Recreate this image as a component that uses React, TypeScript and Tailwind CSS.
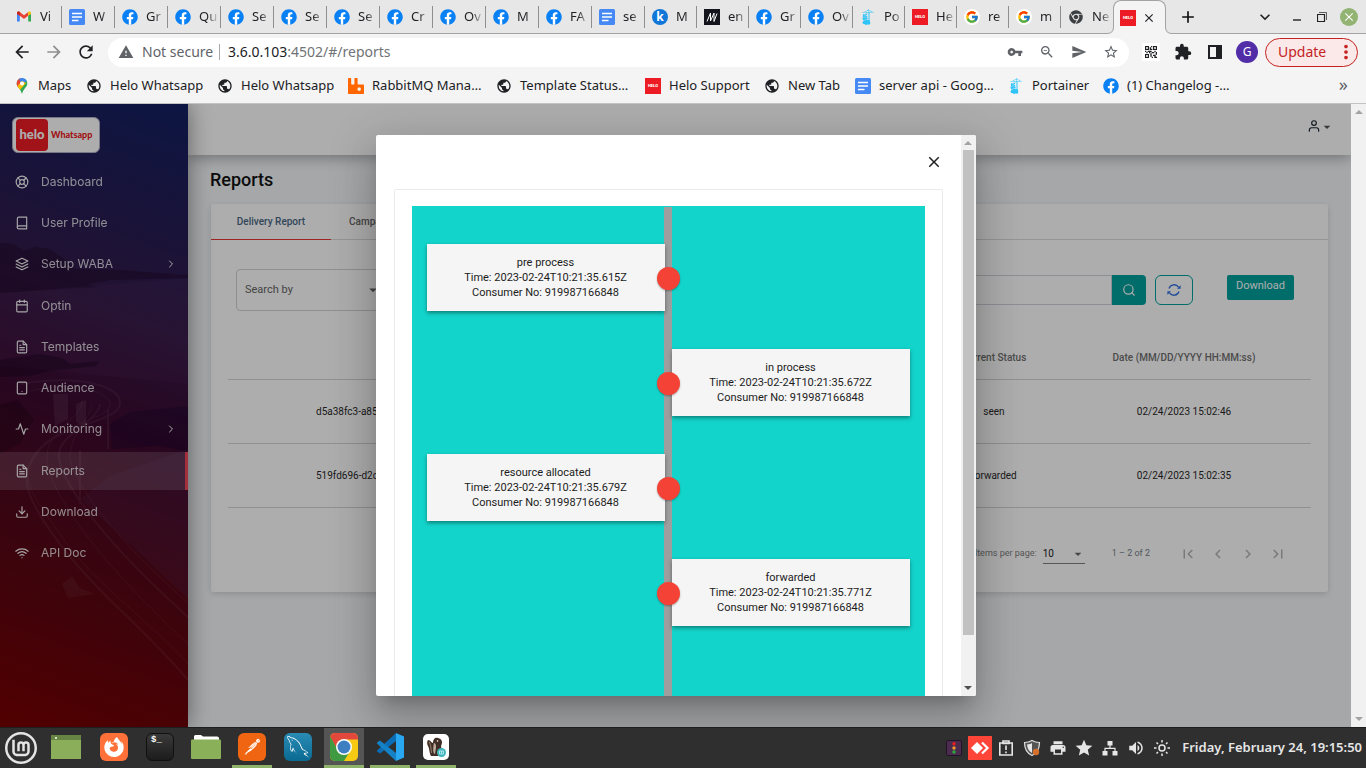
import type { ReactNode } from 'react';
import {
  FiActivity, FiBook, FiCalendar, FiChevronRight, FiDownload, FiFileText,
  FiLayers, FiLifeBuoy, FiSearch, FiTablet, FiUser, FiWifi,
} from 'react-icons/fi';
import {
  MdAdd, MdArrowBack, MdArrowForward, MdArrowDropDown, MdChevronLeft, MdChevronRight,
  MdClose, MdExtension, MdFirstPage, MdLastPage, MdPrint, MdPublic, MdQrCode2, MdRefresh,
  MdSend, MdStar, MdStarBorder, MdVolumeUp, MdVpnKey, MdWarning, MdZoomOut, MdMoreVert,
  MdKeyboardArrowDown,
} from 'react-icons/md';
import { FaChrome, FaFacebook } from 'react-icons/fa';
import { FcGoogle } from 'react-icons/fc';
import { SiFirefoxbrowser, SiLinuxmint, SiPortainer, SiPostman, SiRabbitmq } from 'react-icons/si';
import { GrMysql } from 'react-icons/gr';

/* ---------- Favicons ---------- */

function Facebook() {
  return (
    <span className="flex size-4 items-center justify-center rounded-full bg-[radial-gradient(circle,#fff_60%,transparent_62%)]">
      <FaFacebook className="size-4 text-[#0a80f5]" />
    </span>
  );
}

function Docs() {
  return (
    <svg viewBox="0 0 16 16" className="size-4">
      <rect width="16" height="16" rx="1.5" fill="#4688f4" />
      <path d="M3 4.5h10M3 8h10M3 11.5h6.5" stroke="#fff" strokeWidth="1.5" />
    </svg>
  );
}

function Gmail() {
  return (
    <svg viewBox="0 0 16 12" className="h-3 w-4">
      <path d="M1 2v8.5h2.8V4.5z" fill="#4285f4" />
      <path d="M15 2v8.5h-2.8V4.5z" fill="#34a853" />
      <path d="M1 2.2C1 .6 2.6.2 3.8 1L8 4.2 12.2 1v3.7L8 7.9 3.8 4.7 1 2.9z" fill="#ea4335" />
      <path d="M12.2 1C13.4.2 15 .6 15 2.2v.7l-2.8 1.8z" fill="#fbbc04" />
      <path d="M3.8 1C2.6.2 1 .6 1 2.2v.7l2.8 1.8z" fill="#c5221f" />
    </svg>
  );
}

function Helo() {
  return (
    <span className="flex size-4 items-center justify-center bg-[#ed1c24] font-['Roboto',sans-serif] text-[4px] leading-none font-black text-white">
      HELO
    </span>
  );
}

function Klip() {
  return (
    <span className="flex size-4 items-center justify-center rounded-full bg-[#1077d8] font-['Noto_Sans',sans-serif] text-xs leading-none font-bold text-white">
      k
    </span>
  );
}

function Slanted() {
  return (
    <svg viewBox="0 0 16 16" className="size-4">
      <rect width="16" height="16" fill="#14141c" />
      <path d="M3 12.500 6.500 4 6.500 12 10 4 10 12.500 13 4.500" stroke="#fff" strokeWidth="1" fill="none" />
    </svg>
  );
}

function Google() {
  return (
    <span className="flex size-4 items-center justify-center rounded-full bg-white">
      <FcGoogle className="size-3.5" />
    </span>
  );
}

function MapsPin() {
  return (
    <svg viewBox="0 0 16 16" className="size-4">
      <clipPath id="pin">
        <path d="M8 0a5.3 5.3 0 0 0-5.3 5.4C2.7 9 6.6 10.400 8 16c1.400-5.600 5.300-7 5.300-10.600A5.300 5.300 0 0 0 8 0z" />
      </clipPath>
      <g clipPath="url(#pin)">
        <path d="M0 0h16v16H0z" fill="#34a853" />
        <path d="M0 0h8v5L3 10H0z" fill="#ea4335" />
        <path d="M4.500 0H16L8 7z" fill="#4285f4" />
        <path d="M2 9.500 8 3l4 2-7 8z" fill="#fbbc04" />
        <circle cx="8" cy="5.400" r="2" fill="#fff" />
      </g>
    </svg>
  );
}

const portainer = <SiPortainer className="size-4 text-[#2fc4f7]" />;
const globe = <MdPublic className="size-4 text-[#202124]" />;

/* ---------- Browser ---------- */

const wideTabs: [ReactNode, string][] = [
  [<Gmail />, 'Vi'], [<Docs />, 'W'], [<Facebook />, 'Gr'], [<Facebook />, 'Qu'],
  [<Facebook />, 'Se'], [<Facebook />, 'Se'], [<Facebook />, 'Se'], [<Facebook />, 'Cr'],
  [<Facebook />, 'Ov'], [<Facebook />, 'M'], [<Facebook />, 'FA'], [<Docs />, 'se'],
];
const narrowTabs: [ReactNode, string][] = [
  [<Klip />, 'M'], [<Slanted />, 'en'], [<Facebook />, 'Gr'], [<Facebook />, 'Ov'],
  [portainer, 'Po'], [<Helo />, 'He'], [<Google />, 're'], [<Google />, 'm'],
  [<FaChrome className="size-3.5 text-[#3c4043]" />, 'Ne'],
];

function Tab({ icon, text, width, last }: { icon: ReactNode; text: string; width: string; last?: boolean }) {
  return (
    <button className={`flex h-[22px] items-center border-r pl-[7px] ${width} ${last ? 'border-transparent' : 'border-[#8f8f8f]'}`}>
      <span className="flex w-4 shrink-0 justify-center">{icon}</span>
      <span className="ml-2 text-left text-[13px] whitespace-nowrap [mask-image:linear-gradient(to_right,#000_8px,rgba(0,0,0,0.15)_18px)]">
        {text}
      </span>
    </button>
  );
}

function TabStrip() {
  return (
    <div className="flex h-[34px] items-center border-b border-[#a3a3a3] bg-[#e7e7e7] pl-[9px]">
      {wideTabs.map(([icon, text], i) => <Tab key={i} icon={icon} text={text} width="w-[53px]" />)}
      {narrowTabs.map(([icon, text], i) => (
        <Tab key={i} icon={icon} text={text} width="w-[52px]" last={i === narrowTabs.length - 1} />
      ))}
      <div className="relative -mb-px flex h-[34px] w-[53px] shrink-0 items-center gap-[6px] self-end rounded-t-lg border border-b-0 border-[#a3a3a3] bg-[#f4f4f4] pl-1.5">
        <svg viewBox="0 0 7 7" className="absolute bottom-0 -left-[7px] size-[7px]">
          <path d="M0 6.500Q6.500 6.500 6.500 0H8v7H0z" fill="#f4f4f4" />
          <path d="M0 6.500Q6.500 6.500 6.500 0" fill="none" stroke="#a3a3a3" />
        </svg>
        <svg viewBox="0 0 7 7" className="absolute -right-[7px] bottom-0 size-[7px]">
          <path d="M7 6.500Q.5 6.500 .5 0H-1v7h8z" fill="#f4f4f4" />
          <path d="M7 6.500Q.5 6.500 .5 0" fill="none" stroke="#a3a3a3" />
        </svg>
        <Helo />
        <button aria-label="Close tab"><MdClose className="size-3.5 text-[#202124]" /></button>
      </div>
      <button aria-label="New tab" className="ml-3"><MdAdd className="size-5 text-[#111]" /></button>
      <div className="ml-auto flex items-center pr-2">
        <button aria-label="Search tabs"><MdKeyboardArrowDown className="size-5 text-[#202124]" /></button>
        <button aria-label="Minimize" className="ml-[18px]">
          <svg viewBox="0 0 8 10" className="h-2.5 w-2"><path d="M0 8h8" stroke="#111" strokeWidth="1.300" /></svg>
        </button>
        <button aria-label="Restore" className="ml-[16px]">
          <svg viewBox="0 0 10 10" className="size-2.5" fill="none" stroke="#222">
            <path d="M.5 2.500h7v7h-7z" strokeWidth="1.200" /><path d="M2 .5h7.500v7.500" strokeWidth=".7" />
          </svg>
        </button>
        <button aria-label="Close window" className="ml-[13px] flex size-[18px] items-center justify-center rounded-full bg-[#92b372]">
          <MdClose className="size-3.5 text-white" />
        </button>
      </div>
    </div>
  );
}

function Toolbar() {
  return (
    <div className="flex h-9 items-center bg-[#f4f4f4] pr-2 pl-3">
      <div className="flex w-24 shrink-0 items-center gap-3 text-[#202124]">
        <button aria-label="Back"><MdArrowBack className="size-5" /></button>
        <button aria-label="Forward"><MdArrowForward className="size-5 text-[#8e8e8e]" /></button>
        <button aria-label="Reload"><MdRefresh className="size-5" /></button>
      </div>
      <div className="flex h-[29px] grow items-center rounded-full bg-white px-2.5 text-sm text-[#5f6368]">
        <MdWarning className="size-4" />
        <span className="ml-2 w-[69px] whitespace-nowrap">Not secure</span>
        <span className="mx-2 h-4 w-px bg-[#a9a9a9]" />
        <span className="whitespace-nowrap text-[#6f7377]"><span className="text-[#202124]">3.6.0.103</span>:4502/#/reports</span>
        <span className="ml-auto flex items-center gap-4">
          <MdVpnKey className="size-4" /><MdZoomOut className="size-4" /><MdSend className="size-4" /><MdStarBorder className="size-4" />
        </span>
      </div>
      <div className="ml-[13px] flex items-center gap-[14px] text-[#202124]">
        <span className="flex size-[18px] items-center justify-center bg-white"><MdQrCode2 className="size-4" /></span>
        <MdExtension className="size-[18px]" />
        <svg viewBox="0 0 18 18" className="size-[18px]">
          <path d="M3 3h12v12H3z" fill="none" stroke="currentColor" strokeWidth="2" /><path d="M10 3h5v12h-5z" fill="currentColor" />
        </svg>
        <span className="-mx-[2px] flex size-[22px] items-center justify-center rounded-full bg-[#512da8] text-xs text-white">G</span>
      </div>
      <button className="ml-[9px] flex h-[29px] w-[93px] items-center justify-between rounded-full border border-[#c5221f] bg-[#fae9e8] pl-3 text-sm text-[#c5221f]">
        Update<MdMoreVert className="size-[22px]" />
      </button>
    </div>
  );
}

const bookmarks: [ReactNode, string, string][] = [
  [<MapsPin />, 'Maps', 'w-[72px]'],
  [globe, 'Helo Whatsapp', 'w-[131px]'],
  [globe, 'Helo Whatsapp', 'w-[131px]'],
  [<SiRabbitmq className="size-4 text-[#ff6600]" />, 'RabbitMQ Mana…', 'w-[148px]'],
  [globe, 'Template Status…', 'w-[149px]'],
  [<Helo />, 'Helo Support', 'w-[119px]'],
  [globe, 'New Tab', 'w-[91px]'],
  [<Docs />, 'server api - Goog…', 'w-[153px]'],
  [portainer, 'Portainer', 'w-[95px]'],
  [<Facebook />, '(1) Changelog -…', 'w-[130px]'],
];

function Bookmarks() {
  return (
    <nav className="flex h-[34px] items-center border-b border-[#c2c2c2] bg-[#f4f4f4] pb-0.5 pl-3.5">
      {bookmarks.map(([icon, text, width], i) => (
        <a key={i} href="#" className={`flex shrink-0 items-center gap-2 text-[13px] whitespace-nowrap ${width}`}>
          {icon}{text}
        </a>
      ))}
      <button aria-label="More bookmarks" className="mr-[18px] ml-auto pb-1 text-lg leading-none text-[#5f6368]">»</button>
    </nav>
  );
}

/* ---------- Sidebar ---------- */

const menu = [
  { label: 'Dashboard', Icon: FiLifeBuoy },
  { label: 'User Profile', Icon: FiBook },
  { label: 'Setup WABA', Icon: FiLayers, more: true },
  { label: 'Optin', Icon: FiCalendar },
  { label: 'Templates', Icon: FiFileText },
  { label: 'Audience', Icon: FiTablet },
  { label: 'Monitoring', Icon: FiActivity, more: true },
  { label: 'Reports', Icon: FiFileText, active: true },
  { label: 'Download', Icon: FiDownload },
  { label: 'API Doc', Icon: FiWifi },
];

function Landscape() {
  return (
    <svg viewBox="0 0 188 623" preserveAspectRatio="none" className="absolute inset-0 size-full">
      <path d="M0 139 14 140 24 147 35 143 50 145 64 155 75 165 120 166 188 171V174L110 176 88 180 97 183 0 189z" fill="#1d0426" opacity=".4" />
      <path d="M0 189 188 174V280L0 262z" fill="#6a3a7a" opacity=".1" />
      <path d="M0 256 40 250 62 254 70 260 100 257 96 262 50 267 30 272 0 273z" fill="#12021a" opacity=".35" />
      <path d="M0 300 18 296 34 315 20 340 0 350z" fill="#160310" opacity=".3" />
      <path d="M110 320 130 308 188 302V348L160 342 112 345z" fill="#12022e" opacity=".3" />
      <g fill="none" stroke="#b090a8" opacity=".1">
        <path d="M20 280C80 270 122 282 120 300S62 320 40 345 22 390 60 440 140 520 188 576" strokeWidth="2" />
        <path d="M30 287C80 275 112 290 110 302S50 325 35 350 28 385 62 433 140 508 188 560" />
        <path d="M100 300C98 318 60 330 59 350S90 425 188 513" strokeWidth="2" />
        <path d="M92 300C90 316 72 328 70 350S110 430 188 499" />
        <path d="M82 296C84 312 50 325 47 350S80 440 188 540" />
        <path d="M108 305V345M80 346V400" strokeWidth="2" />
      </g>
      <path d="M53 290H68V315L55 322zM76 300 86 296V325L76 318z" fill="#a890a8" opacity=".13" />
      <path d="M62 480 72 472 80 484 95 490 68 494z" fill="#9c6a7c" opacity=".12" />
      <path d="M80 395 110 372 188 345V495L130 440z" fill="#5d3a6a" opacity=".16" />
    </svg>
  );
}

function Sidebar() {
  return (
    <aside className="relative z-20 flex w-[188px] shrink-0 flex-col bg-[linear-gradient(20deg,#780000_0%,#560716_28%,#3c0a30_50%,#351a48_66%,#132063_100%)] text-white shadow-[0_0_22px_rgba(0,0,0,0.45)]">
      <Landscape />
      <a href="#" className="relative mt-[13px] ml-3 flex h-9 w-[88px] items-center gap-[3px] rounded-md border border-[#b0b0c8] bg-white pl-[3px]">
        <span className="flex size-8 shrink-0 items-center justify-center rounded-sm bg-[#ed1c24] font-['Lato',sans-serif] text-[13px] font-black">helo</span>
        <span className="font-['Lato',sans-serif] text-[9px] font-black text-[#ed1c24]">Whatsapp</span>
      </a>
      <nav className="relative mt-2.5 flex h-[409px] flex-col justify-between font-['Inter',sans-serif] text-xs">
        {menu.map(({ label, Icon, more, active }) => (
          <a
            key={label}
            href="#"
            className={`flex h-[38px] items-center border-r-[3px] pr-2 pl-[15px] ${active ? 'border-[#f0495a] bg-white/15' : 'border-transparent'}`}
          >
            <Icon className="size-3.5 shrink-0 opacity-95" />
            <span className="ml-3 grow opacity-80">{label}</span>
            {more && <FiChevronRight className="size-3 shrink-0" />}
          </a>
        ))}
      </nav>
    </aside>
  );
}

/* ---------- Page ---------- */

const rows = [
  { id: 'd5a38fc3-a85', status: 'seen', date: '02/24/2023 15:02:46' },
  { id: '519fd696-d2c', status: 'forwarded', date: '02/24/2023 15:02:35' },
];

function ReloadArrows() {
  return (
    <svg viewBox="0 0 14 14" className="size-3.5">
      <path d="M2 5.500A5.300 5.300 0 0 1 11.500 4.200M12 8.500A5.300 5.300 0 0 1 2.500 9.800" fill="none" stroke="currentColor" strokeWidth="1.300" />
      <path d="M10 5.800H13.600V2.200zM4 8.200H.4V11.800z" fill="currentColor" />
    </svg>
  );
}

function ReportsPage() {
  return (
    <div className="flex min-w-0 grow flex-col bg-[#f4f7fa]">
      <header className="z-10 flex h-[51px] shrink-0 items-center justify-end bg-white pr-4 pb-2 shadow-[0_2px_14px_rgba(0,0,0,0.35)]">
        <button aria-label="Account" className="flex items-center text-[#1a2530]">
          <FiUser className="-mr-0.5 size-3.5" /><MdArrowDropDown className="mt-0.5 size-4 text-[#555]" />
        </button>
      </header>
      <main className="pr-[23px] pl-[23px]">
        <h1 className="-ml-px pt-3 text-lg leading-[26px] font-medium text-[#111]">Reports</h1>
        <section className="mt-[11px] flex h-[388px] flex-col rounded-xs bg-white shadow-[0_2px_6px_rgba(0,0,0,0.15)]">
          <div className="flex h-9 border-b border-[#dcdcdc] text-[10px] font-medium">
            <button className="-mb-px w-[120px] border-b border-[#e53935] text-[#4a6785]">Delivery Report</button>
            <button className="w-[120px] pl-[18px] text-left text-[#666]">Campaign</button>
          </div>
          <form className="flex items-start pr-[34px] pl-[25px]">
            <label className="relative mt-[29px] flex w-[150px] items-center">
              <select aria-label="Search by" className="h-[42px] w-full appearance-none rounded border border-[#d3d3d3] px-2 text-[11px] text-[#666]">
                <option>Search by</option>
              </select>
              <MdArrowDropDown className="pointer-events-none absolute right-1 size-[18px] text-[#666]" />
            </label>
            <input aria-label="Search value" className="mt-[35px] ml-10 h-[30px] min-w-0 grow border border-[#ced4da] px-2 text-[11px]" />
            <button type="button" aria-label="Search" className="mt-[35px] flex h-[30px] w-[34px] items-center justify-center rounded-r bg-[#00a19c] text-white">
              <FiSearch className="size-3.5" />
            </button>
            <button type="button" aria-label="Refresh" className="mt-[35px] ml-[9px] flex h-[30px] w-[38px] items-center justify-center rounded-md border border-[#00a19c] text-[#2f6fe0]">
              <ReloadArrows />
            </button>
            <button type="button" className="mt-[35px] ml-[34px] h-[25px] w-[67px] rounded-xs bg-[#00a19c] pb-0.5 text-[11px] text-white">Download</button>
          </form>
          <div className="mt-[26px] pr-[17px] pl-[17px]">
            <table className="w-full table-fixed border-collapse text-[10px] text-[#2a2a2a]">
              <thead>
                <tr className="h-[42px] border-b border-[#d4d4d4] text-[#707070]">
                  <th />
                  <th className="w-[126px] text-center font-medium">Current Status</th>
                  <th className="w-[254px] text-center font-medium">Date (MM/DD/YYYY HH:MM:ss)</th>
                </tr>
              </thead>
              <tbody>
                {rows.map((r) => (
                  <tr key={r.id} className="h-16 border-b border-[#d4d4d4]">
                    <td className="pl-[88px]">{r.id}</td>
                    <td className="text-center">{r.status}</td>
                    <td className="text-center">{r.date}</td>
                  </tr>
                ))}
              </tbody>
            </table>
          </div>
          <div className="mt-[37px] flex items-center justify-end pr-[41px] text-[9px] text-[#808080]">
            <label htmlFor="size">Items per page:</label>
            <span className="relative ml-1.5 flex w-[42px] items-center border-b border-[#808080] text-[#222]">
              <select id="size" className="h-[18px] w-full appearance-none text-[10px]"><option>10</option></select>
              <MdArrowDropDown className="pointer-events-none absolute -right-px size-4 text-[#666]" />
            </span>
            <span className="mr-[29px] ml-[27px] whitespace-nowrap text-[#76808c]">1 – 2 of 2</span>
            <span className="flex gap-3 text-[#b4b4b4]">
              <button aria-label="First page"><MdFirstPage className="size-[18px]" /></button>
              <button aria-label="Previous page"><MdChevronLeft className="size-[18px]" /></button>
              <button aria-label="Next page"><MdChevronRight className="size-[18px]" /></button>
              <button aria-label="Last page"><MdLastPage className="size-[18px]" /></button>
            </span>
          </div>
        </section>
      </main>
    </div>
  );
}

/* ---------- Timeline dialog ---------- */

const steps = [
  { name: 'pre process', time: '2023-02-24T10:21:35.615Z' },
  { name: 'in process', time: '2023-02-24T10:21:35.672Z' },
  { name: 'resource allocated', time: '2023-02-24T10:21:35.679Z' },
  { name: 'forwarded', time: '2023-02-24T10:21:35.771Z' },
];

function Arrow({ up, color }: { up?: boolean; color: string }) {
  return (
    <svg viewBox="0 0 8 4" className={`h-1 w-2 ${color}`}>
      <path d={up ? 'M0 4 4 0l4 4z' : 'M0 0h8L4 4z'} fill="currentColor" />
    </svg>
  );
}

function TimelineDialog() {
  return (
    <div className="absolute inset-0 z-30 flex items-center justify-center bg-black/32">
      <div
        role="dialog"
        aria-label="Message timeline"
        className="flex h-[90%] w-[600px] overflow-hidden rounded-xs bg-white shadow-[0_11px_15px_-7px_rgba(0,0,0,0.2),0_24px_38px_3px_rgba(0,0,0,0.14),0_9px_46px_8px_rgba(0,0,0,0.12)]"
      >
        <div className="flex grow flex-col overflow-hidden px-[18px]">
          <div className="flex h-[54px] shrink-0 items-center justify-end">
            <button aria-label="Close"><MdClose className="size-[18px] text-[#222]" /></button>
          </div>
          <div className="grow rounded-t-xs border border-b-0 border-[#ebebeb] px-[17px] pt-4">
            <ol className="relative flex h-full flex-col gap-[38px] bg-[#13d4ca] px-[15px] pt-[38px]">
              <span className="absolute top-px bottom-0 left-1/2 -ml-1 w-2 bg-[#9e9e9e]" />
              {steps.map((s, i) => (
                <li key={s.name} className="relative grid grid-cols-2 gap-[7px] text-center text-[11px] leading-[15px] text-[#1c1c1c]">
                  <div className={`bg-[#f5f5f5] py-[11px] shadow-[0_2px_4px_rgba(0,0,0,0.4)] ${i % 2 ? 'col-start-2' : ''}`}>
                    <p>{s.name}</p>
                    <p>Time: {s.time}</p>
                    <p>Consumer No: 919987166848</p>
                  </div>
                  <span className="absolute top-1/2 left-1/2 -mt-[11px] -ml-[11px] size-[23px] rounded-full bg-[#f44336] shadow-[0_1px_2px_rgba(0,0,0,0.3)]" />
                </li>
              ))}
            </ol>
          </div>
        </div>
        <div className="flex w-[15px] shrink-0 flex-col items-center bg-[#f1f1f1]">
          <span className="flex h-[15px] items-center"><Arrow up color="text-[#a3a3a3]" /></span>
          <span className="h-[485px] w-[11px] bg-[#c1c1c1]" />
          <span className="mt-auto flex h-[15px] items-center"><Arrow color="text-[#505050]" /></span>
        </div>
      </div>
    </div>
  );
}

/* ---------- Taskbar ---------- */

function VsCode() {
  return (
    <svg viewBox="0 0 28 28" className="size-7">
      <path d="M20 0v8L4 20.500 1 18.500V17.500z" fill="#0a6db5" />
      <path d="M20 28v-8L4 7.500 1 9.500V10.500z" fill="#1582c8" />
      <path d="M20 0 28 3.500V24.500L20 28z" fill="#29a7f0" />
    </svg>
  );
}

function ChromeLogo() {
  return (
    <svg viewBox="0 0 28 28" className="size-7">
      <clipPath id="tile"><rect width="28" height="28" rx="5" /></clipPath>
      <g clipPath="url(#tile)">
        <path d="M0 0h28v28H0z" fill="#f6c913" />
        <path d="M0 0h28v6.500H14L7 16 0 4z" fill="#e2493c" />
        <path d="M0 3 8 17.500 19.500 19 14 28H0z" fill="#3f9a41" />
        <circle cx="14" cy="14" r="8" fill="#fff" />
        <circle cx="14" cy="14" r="6.500" fill="#3d7fc0" />
      </g>
    </svg>
  );
}

function Beaver() {
  return (
    <svg viewBox="0 0 26 26" className="size-[26px]">
      <rect width="26" height="26" rx="5" fill="#fff" />
      <path d="M5 6C8 6 8 9 10 9 10 5 12 3 15 4 19 5 20 8 18 12L19 17 15 22H8C6 19 7 15 4.500 11 4 9 4 7 5 6z" fill="#3f2d26" />
      <path d="M6 8C8 10 8 14 8.500 19" fill="none" stroke="#8a7364" strokeWidth="1.200" />
      <path d="M11 9C13 9 13 12 13 14L12 20C9.500 20 10 13 11 9z" fill="#bba898" />
      <circle cx="14.500" cy="7" r=".8" fill="#fff" />
      <circle cx="18.500" cy="18.500" r="4.500" fill="#3fb6bd" />
      <path d="M16.500 17h4v3h-4zM18.500 17v3" fill="none" stroke="#d5f3f3" strokeWidth=".7" />
    </svg>
  );
}

const apps: { name: string; icon: ReactNode; running?: boolean; focused?: boolean }[] = [
  {
    name: 'Desktop',
    icon: (
      <svg viewBox="0 0 30 24" className="mr-1 h-6 w-[30px]">
        <path d="M0 0h30v24H0z" fill="#8bae5a" /><path d="M0 0h30v5H0z" fill="#668542" /><circle cx="5" cy="3" r="1" fill="#fff" />
      </svg>
    ),
  },
  {
    name: 'Firefox',
    icon: <span className="flex size-7 items-center justify-center rounded-md bg-[#ff7139]"><SiFirefoxbrowser className="size-5 text-white" /></span>,
  },
  {
    name: 'Terminal',
    icon: <span className="size-7 rounded-md border border-[#111] bg-[linear-gradient(#3a3a3a,#1c1c1c)] pl-1 text-left font-['Liberation_Mono',monospace] text-[9px] leading-[13px] font-bold text-white">$_</span>,
  },
  {
    name: 'Files',
    icon: (
      <svg viewBox="0 0 30 24" className="h-6 w-[30px]">
        <path d="M3 5V1.500Q3 0 4.500 0H10l2 1.500h14Q28 1.500 28 3v4H3z" fill="#fff" /><rect y="4.500" width="30" height="19.500" rx="1" fill="#8bb05a" />
      </svg>
    ),
  },
  {
    name: 'Postman',
    running: true,
    icon: (
      <span className="flex size-7 items-center justify-center rounded-md bg-[#ef6511]">
        <span className="flex items-center justify-center rounded-full bg-[radial-gradient(circle,#fff_60%,transparent_62%)]"><SiPostman className="size-[26px] text-[#ef6511]" /></span>
      </span>
    ),
  },
  {
    name: 'MySQL Workbench',
    icon: <span className="flex size-7 items-center justify-center rounded-md bg-[linear-gradient(#2a8bb5,#0a6a92)]"><GrMysql className="size-[22px] text-white" /></span>,
  },
  { name: 'Chrome', running: true, focused: true, icon: <ChromeLogo /> },
  { name: 'VS Code', running: true, icon: <VsCode /> },
  { name: 'DBeaver', running: true, icon: <Beaver /> },
];

const tray: ReactNode[] = [
  <svg viewBox="0 0 16 16" className="size-4">
    <rect x=".5" y=".5" width="15" height="15" rx="1.500" fill="#4a2c4f" stroke="#251228" />
    <circle cx="8" cy="3.800" r="1.700" fill="#e8221c" /><circle cx="8" cy="8" r="1.700" fill="#f09a2c" /><circle cx="8" cy="12" r="1.700" fill="#2eaa3b" />
  </svg>,
  <svg viewBox="0 0 24 24" className="size-6">
    <path d="M0 0h24v24H0z" fill="#fe4538" /><path d="m3 12 6-6 6 6-6 6z" fill="#fff" />
    <path d="m14 6.500 5.500 5.500-5.500 5.500" fill="none" stroke="#fff" strokeWidth="2.200" />
  </svg>,
  <svg viewBox="0 0 16 16" className="size-4" fill="none" stroke="#e6e6e6" strokeWidth="1.600">
    <path d="M1.800 3h12.400v12H1.800z" /><path d="M5 3.500V1h6v2.500zM8 5.500v4.500M8 11.500v1.800" />
  </svg>,
  <svg viewBox="0 0 18 18" className="size-[18px]">
    <path d="M9 1.500C6.500 3 4 3.500 1.500 3.500 1.500 9 3.500 14 9 16.500 14.500 14 16.500 9 16.500 3.500 14 3.500 11.500 3 9 1.500z" fill="#555" stroke="#e0e0e0" strokeWidth="1.200" />
    <path d="M9 4C7.500 5 6 5.300 4 5.500 4.300 9.500 6 12.500 9 14z" fill="#e6e6e6" /><circle cx="13" cy="13" r="3.200" fill="#d5702d" />
  </svg>,
  <MdPrint className="size-[18px]" />,
  <MdStar className="size-5" />,
  <svg viewBox="0 0 16 16" className="size-4" fill="currentColor">
    <path d="M5.500 1h5v4.500h-5zM.5 11h5v4.500h-5zM10.500 11h5v4.500h-5zM7.400 5h1.200v3H7.400z" /><path d="M3 11V8.300h10V11" fill="none" stroke="currentColor" strokeWidth="1.200" />
  </svg>,
  <MdVolumeUp className="size-[18px]" />,
  <svg viewBox="0 0 16 16" className="size-4" fill="none" stroke="currentColor" strokeWidth="1.500">
    <circle cx="8" cy="8" r="3" /><path d="M8 0v2.500M8 13.500V16M0 8h2.500M13.500 8H16M2.500 2.500l1.500 1.500M12 12l1.500 1.500M2.500 13.500 4 12M12 4l1.500-1.500" />
  </svg>,
];

function Taskbar() {
  return (
    <footer className="flex h-[41px] shrink-0 items-stretch border-t border-[#1d1f1f] bg-[#2f2f2f]">
      <button aria-label="Menu" className="flex w-[42px] items-center justify-center">
        <SiLinuxmint className="size-8 text-[#e4e4e4]" />
      </button>
      <div className="ml-1.5 flex gap-1.5">
        {apps.map((a) => (
          <button
            key={a.name}
            aria-label={a.name}
            className={`flex w-10 items-center justify-center border-b-[3px] ${a.running ? 'border-[#8fb26b]' : 'border-transparent'} ${a.focused ? 'bg-[#555]' : ''}`}
          >
            {a.icon}
          </button>
        ))}
      </div>
      <div className="ml-auto flex items-center pr-1 text-[#e6e6e6]">
        {tray.map((icon, i) => <span key={i} className="flex w-[26px] justify-center">{icon}</span>)}
        <span className="ml-[5px] w-[182px] text-right text-[13px] font-semibold whitespace-nowrap">Friday, February 24, 19:15:50</span>
      </div>
    </footer>
  );
}

export default function App() {
  return (
    <div className="flex h-screen flex-col overflow-hidden font-['Noto_Sans',sans-serif] text-[#202124]">
      <TabStrip />
      <Toolbar />
      <Bookmarks />
      <div className="flex min-h-0 grow font-['Roboto',sans-serif]">
        <div className="relative flex min-w-0 grow overflow-hidden">
          <Sidebar />
          <ReportsPage />
          <TimelineDialog />
        </div>
        <div className="flex w-[15px] shrink-0 flex-col items-center justify-between bg-[#f1f1f1] py-1.5">
          <Arrow up color="text-[#a3a3a3]" />
          <Arrow color="text-[#a3a3a3]" />
        </div>
      </div>
      <Taskbar />
    </div>
  );
}
